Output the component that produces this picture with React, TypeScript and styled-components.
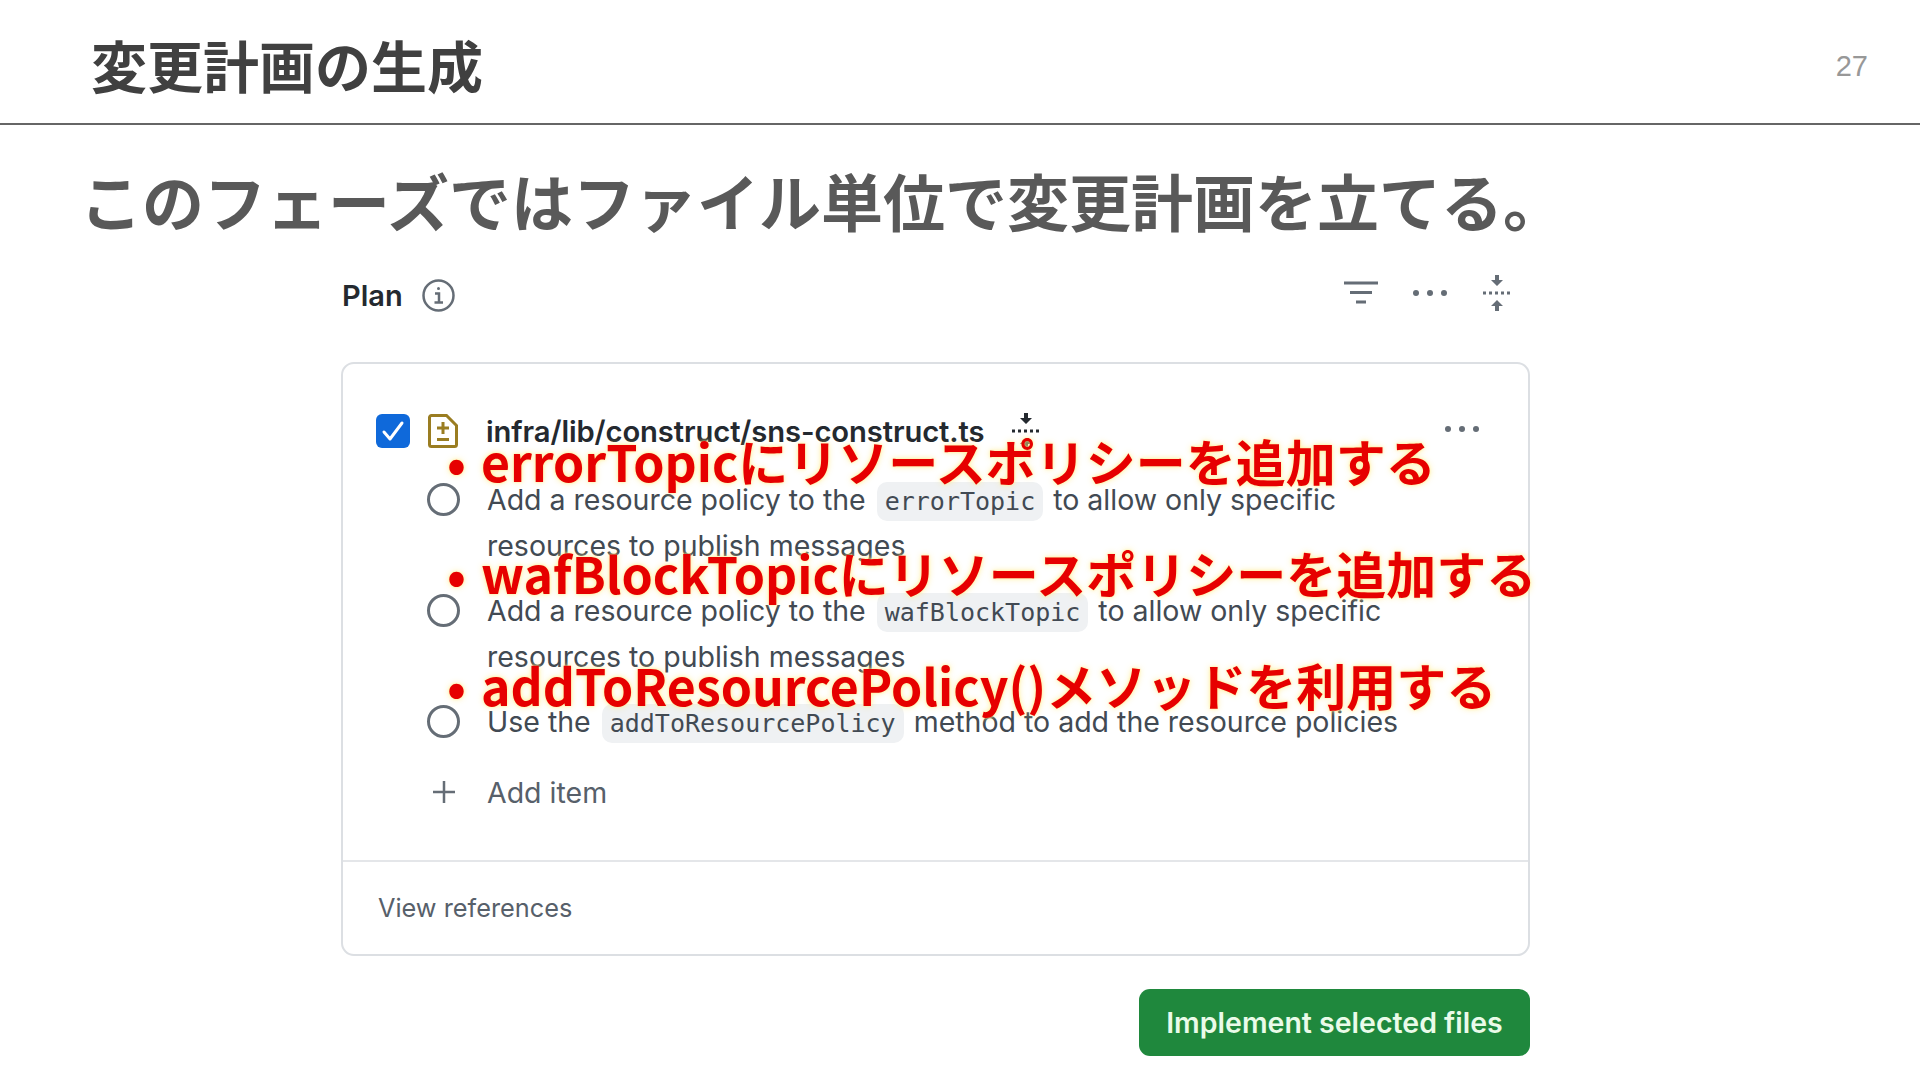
import React from "react";
import styled, { createGlobalStyle } from "styled-components";

const Global = createGlobalStyle`
  html, body { margin: 0; padding: 0; background: #fff; }
  body { width: 1920px; height: 1080px; overflow: hidden; font-family: "Noto Sans CJK JP", sans-serif; }
`;

const Page = styled.div`
  width: 1920px;
  height: 1080px;
  overflow: hidden;
  display: flex;
  flex-direction: column;
`;
const Header = styled.header`
  height: 123px;
  flex: none;
  box-sizing: content-box;
  border-bottom: 2px solid #666;
  display: flex;
  align-items: center;
  justify-content: space-between;
  padding: 0 52px 0 91px;
`;
const Title = styled.h1`
  margin: 4px 0 0;
  font: 700 56px/1 "Noto Sans CJK JP", sans-serif;
  color: #404040;
`;
const PageNo = styled.span`
  margin-top: 9px;
  font: 400 29px/1 "Liberation Sans", sans-serif;
  color: #989898;
`;
const Lead = styled.h2`
  margin: 0;
  height: 137px;
  flex: none;
  box-sizing: border-box;
  padding: 12px 0 0 80px;
  display: flex;
  align-items: center;
  font: 700 62px/1 "Noto Sans CJK JP", sans-serif;
  color: #595959;
`;
const Shot = styled.section`
  position: relative;
  flex: none;
  width: 1189px;
  margin-left: 341px;
  font-family: Inter, "Liberation Sans", sans-serif;
`;
const PlanBar = styled.div`
  height: 66px;
  margin-bottom: 34px;
  padding-left: 1px;
  display: flex;
  align-items: center;
  gap: 19px;
`;
const PlanLabel = styled.span`
  font-size: 29px;
  font-weight: 600;
  color: #24292f;
`;
const Tools = styled.div`
  margin-left: auto;
  margin: 0 18px 4px auto;
  display: flex;
  align-items: center;
  gap: 34px;
  color: #656d76;
`;
const Card = styled.div`
  border: 2px solid #dcdfe3;
  border-radius: 13px;
  background: #fff;
`;
const Body = styled.div`
  height: 496px;
  box-sizing: border-box;
  padding: 47px 0 0 33px;
`;
const FileRow = styled.div`
  height: 40px;
  display: flex;
  align-items: center;
  color: #24292f;
`;
const Check = styled.span`
  width: 34px;
  height: 34px;
  flex: none;
  border-radius: 6px;
  background: #0f69da;
  display: flex;
  align-items: center;
  justify-content: center;
  margin-right: 18px;
`;
const FileName = styled.span`
  margin-left: 28px;
  margin-right: 27px;
  font-size: 29.200px;
  font-weight: 600;
  letter-spacing: -0.1px;
  white-space: nowrap;
`;
const RowMenu = styled.span`
  margin: 0 48px 4px auto;
  display: flex;
  color: #656d76;
`;
const Items = styled.ul`
  list-style: none;
  margin: 26px 0 0;
  padding: 0 0 0 51px;
  display: flex;
  flex-direction: column;
  gap: 19px;
`;
const Item = styled.li`
  display: flex;
  align-items: flex-start;
`;
const Radio = styled.span`
  width: 33px;
  height: 33px;
  flex: none;
  box-sizing: border-box;
  margin: 6px 27px 0 0;
  border: 3px solid #656d76;
  border-radius: 50%;
`;
const ItemText = styled.div`
  width: 930px;
  font-size: 28.500px;
  line-height: 46px;
  color: #424a53;
`;
const Code = styled.code`
  display: inline-block;
  height: 39px;
  line-height: 39px;
  padding: 0 8px;
  margin: 0 10px 0 11px;
  border-radius: 10px;
  background: #eff1f3;
  font-family: "DejaVu Sans Mono", monospace;
  font-size: 25px;
  color: #424a53;
`;
const AddRow = styled.div`
  margin: 24px 0 0 51px;
  height: 46px;
  display: flex;
  align-items: center;
  font-size: 28.500px;
  color: #57606a;
`;
const AddIcon = styled.span`
  width: 33px;
  flex: none;
  display: flex;
  justify-content: center;
  margin-right: 27px;
`;
const Footer = styled.div`
  height: 94px;
  box-sizing: border-box;
  border-top: 2px solid #e4e6e9;
  padding: 0 0 2px 35px;
  display: flex;
  align-items: center;
  font-size: 25.300px;
  color: #57606a;
`;
const Actions = styled.div`
  margin-top: 33px;
  display: flex;
  justify-content: flex-end;
`;
const Primary = styled.button`
  width: 391px;
  height: 67px;
  border: 0;
  border-radius: 11px;
  background: #1f883d;
  color: #eafbe9;
  font-family: Inter, "Liberation Sans", sans-serif;
  font-size: 28.500px;
  font-weight: 600;
`;
const Notes = styled.ul`
  position: absolute;
  left: 106px;
  top: 142px;
  margin: 0;
  padding: 0;
  list-style: none;
  font: 700 50px/112px "Noto Sans CJK JP", sans-serif;
  color: #e60000;
  text-shadow: 0 0 6px rgba(255, 236, 140, 0.9), 0 0 2px rgba(255, 236, 140, 0.9);
  white-space: nowrap;
`;
const Note = styled.li`
  display: flex;
`;
const Bullet = styled.span`
  width: 34px;
  flex: none;
`;

const Kebab = () => (
  <svg width="36" height="8" viewBox="0 0 36 8" fill="currentColor"><circle cx="4" cy="4" r="3" /><circle cx="18" cy="4" r="3" /><circle cx="32" cy="4" r="3" /></svg>
);
const Fold = () => (
  <svg width="30" height="36" viewBox="0 0 30 36" fill="currentColor">
    <path d="M15 11 9 5h4V0h4v5h4zM15 25l6 6h-4v5h-4v-5H9z" />
    <path d="M1 16.5h3v3H1zM7 16.5h3v3H7zM13 16.5h3v3h-3zM19 16.5h3v3h-3zM25 16.5h3v3h-3z" />
  </svg>
);
const Filter = () => (
  <svg width="34" height="24" viewBox="0 0 34 24" fill="none" stroke="currentColor" strokeWidth="3"><path d="M0 2h34M6 11.500h22M12 21h10" /></svg>
);
const Info = () => (
  <svg width="33" height="33" viewBox="0 0 33 33" fill="none" stroke="#656d76" strokeWidth="2.500"><circle cx="16.500" cy="16.500" r="15" /><path d="M13 14.500h4v9M12.500 23.500h8.500" /><circle cx="16.500" cy="9.500" r="1.500" fill="#656d76" stroke="none" /></svg>
);
const Tick = () => (
  <svg width="24" height="24" viewBox="0 0 24 24" fill="none" stroke="#fff" strokeWidth="3" strokeLinecap="round" strokeLinejoin="round"><path d="M3 13l6 7L21 4" /></svg>
);
const FileDiff = () => (
  <svg width="30" height="34" viewBox="0 0 30 34" fill="none" stroke="#9a7d22" strokeWidth="3"><path d="M3.500 1.500h15l10 10v19a2 2 0 0 1-2 2h-23a2 2 0 0 1-2-2v-27a2 2 0 0 1 2-2z" /><path d="M15 8v12M9 14h12M9 25.500h12" /></svg>
);
const Plus = () => (
  <svg width="24" height="24" viewBox="0 0 24 24" stroke="#656d76" strokeWidth="2.500"><path d="M12 1v22M1 12h22" /></svg>
);

export default function App() {
  return (
    <Page>
      <Global />
      <Header>
        <Title>変更計画の生成</Title>
        <PageNo>27</PageNo>
      </Header>
      <Lead>このフェーズではファイル単位で変更計画を立てる。</Lead>
      <Shot>
        <PlanBar>
          <PlanLabel>Plan</PlanLabel>
          <Info />
          <Tools><Filter /><Kebab /><Fold /></Tools>
        </PlanBar>
        <Card>
          <Body>
            <FileRow>
              <Check><Tick /></Check>
              <FileDiff />
              <FileName>infra/lib/construct/sns-construct.ts</FileName>
              <Fold />
              <RowMenu><Kebab /></RowMenu>
            </FileRow>
            <Items>
              <Item>
                <Radio />
                <ItemText>Add a resource policy to the<Code>errorTopic</Code>to allow only specific resources to publish messages</ItemText>
              </Item>
              <Item>
                <Radio />
                <ItemText>Add a resource policy to the<Code>wafBlockTopic</Code>to allow only specific resources to publish messages</ItemText>
              </Item>
              <Item>
                <Radio />
                <ItemText>Use the<Code>addToResourcePolicy</Code>method to add the resource policies</ItemText>
              </Item>
            </Items>
            <AddRow>
              <AddIcon><Plus /></AddIcon>
              Add item
            </AddRow>
          </Body>
          <Footer>View references</Footer>
        </Card>
        <Actions>
          <Primary>Implement selected files</Primary>
        </Actions>
        <Notes>
          <Note><Bullet>•</Bullet>errorTopicにリソースポリシーを追加する</Note>
          <Note><Bullet>•</Bullet>wafBlockTopicにリソースポリシーを追加する</Note>
          <Note><Bullet>•</Bullet>addToResourcePolicy()メソッドを利用する</Note>
        </Notes>
      </Shot>
    </Page>
  );
}
